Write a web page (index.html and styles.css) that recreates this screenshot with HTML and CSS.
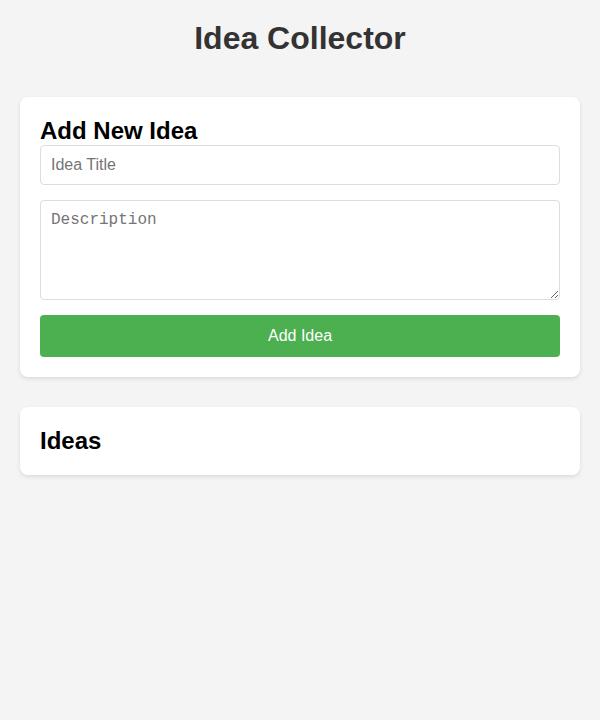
FILE: index.html
```html
<!DOCTYPE html>
<html lang="en">
<head>
<meta charset="utf-8">
<title>Idea Collector</title>
<link rel="stylesheet" href="styles.css">
</head>
<body>
<h1 class="page-title">Idea Collector</h1>
<section class="card">
  <h2 class="card-title">Add New Idea</h2>
  <input class="field" type="text" placeholder="Idea Title">
  <textarea class="field area" placeholder="Description"></textarea>
  <button class="btn">Add Idea</button>
</section>
<section class="card">
  <h2 class="card-title">Ideas</h2>
</section>
</body>
</html>
```
FILE: styles.css
```css
html, body {
  margin: 0;
  padding: 0;
}
body {
  background: #f4f4f4;
  font-family: "Liberation Sans", Arial, sans-serif;
  padding: 20px;
  display: flex;
  flex-direction: column;
}
.page-title {
  margin: 0 0 40px;
  font-size: 32px;
  text-align: center;
  color: #333;
}
.card {
  background: #fff;
  border-radius: 8px;
  box-shadow: 0 2px 4px rgba(0, 0, 0, 0.1);
  padding: 20px;
  margin-bottom: 30px;
  display: flex;
  flex-direction: column;
}
.card-title {
  margin: 0;
  font-size: 24px;
  color: #000;
}
.field {
  box-sizing: border-box;
  width: 100%;
  padding: 10px;
  border: 1px solid #ddd;
  border-radius: 4px;
  font-size: 16px;
  font-family: "Liberation Sans", Arial, sans-serif;
  margin: 0 0 15px;
  background: #fff;
}
.area {
  height: 100px;
  font-family: "Liberation Mono", monospace;
}
.btn {
  box-sizing: border-box;
  width: 100%;
  padding: 12px;
  border: none;
  border-radius: 4px;
  background: #4caf50;
  color: #fff;
  font-size: 16px;
  font-family: "Liberation Sans", Arial, sans-serif;
  cursor: pointer;
}
```
